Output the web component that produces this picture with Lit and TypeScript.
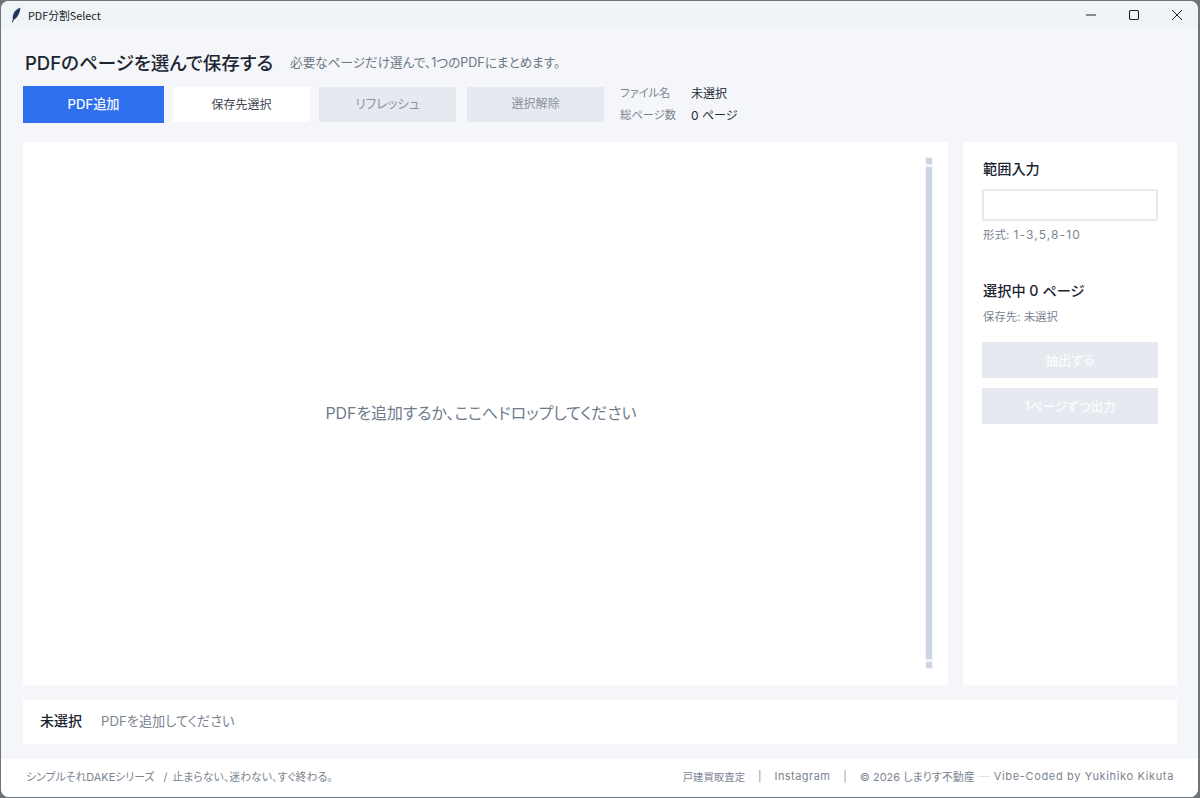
import { LitElement, html, css } from "lit";
import { customElement } from "lit/decorators.js";

@customElement("app-root")
export class AppRoot extends LitElement {
  static styles = css`
    :host {
      display: block;
      width: 1200px;
      height: 798px;
      background: #6f7478;
      font-family: Inter, "Noto Sans CJK JP", "Noto Sans", sans-serif;
      font-feature-settings: "palt";
      color: #1f2937;
      overflow: hidden;
    }
    .win {
      box-sizing: border-box;
      width: 1197px;
      height: 796px;
      margin-left: 1px;
      margin-top: 1px;
      border-radius: 8px;
      overflow: hidden;
      background: #f4f6f9;
      display: flex;
      flex-direction: column;
    }
    .titlebar {
      height: 28px;
      flex: none;
      background: #eff4f8;
      display: flex;
      align-items: center;
      padding-left: 9px;
      font-family: "Noto Sans CJK JP", sans-serif;
      font-feature-settings: normal;
      font-size: 10.8px;
      color: #1a1a1a;
    }
    .titlebar .feather { width: 12px; height: 16px; margin-right: 6px; flex: none; }
    .titlebar .name { flex: 1; }
    .ctl { width: 43px; height: 28px; display: flex; align-items: center; justify-content: center; }
    .ctl svg { width: 12px; height: 12px; }
    .content {
      flex: 1;
      display: flex;
      flex-direction: column;
      padding: 0 21px 15px 22px;
      min-height: 0;
    }
    .head {
      display: flex;
      align-items: center;
      height: 24px;
      margin-top: 22px;
      padding-left: 2px;
    }
    .head h1 { font-size: 18.5px; font-weight: 500; margin: 0; color: #1b2430; line-height: 24px; }
    .head p { font-size: 12.6px; margin: 0 0 0 17px; color: #6b7685; line-height: 16px; }
    .toolbar { display: flex; align-items: center; height: 37px; margin-top: 11px; }
    .btn {
      box-sizing: border-box;
      display: flex;
      align-items: center;
      justify-content: center;
      font-size: 12px;
      border: none;
      width: 137px;
      height: 35px;
      flex: none;
      padding-bottom: 3px;
    }
    .primary { width: 141px; height: 37px; background: #2f6fed; color: #f4f8ff; font-weight: 500; margin-right: 9px; font-size: 13.2px; padding-bottom: 2px; }
    .white { background: #ffffff; color: #3f4652; margin-right: 9px; }
    .muted { background: #e6e9ef; color: #8a93a0; margin-right: 11px; font-size: 12.6px; padding-bottom: 4px; }
    .muted.last { margin-right: 16px; font-size: 12.2px; padding-bottom: 3px; }
    .info {
      display: grid;
      grid-template-columns: 71px auto;
      row-gap: 3px;
      font-size: 12px;
      line-height: 19px;
      margin-top: -1px;
    }
    .info .k { color: #7b8491; font-size: 11.3px; }
    .info .v { color: #1f2937; }
    .main { flex: 1; display: flex; gap: 15px; margin-top: 19px; min-height: 0; }
    .canvas {
      flex: 1;
      background: #fff;
      position: relative;
      display: flex;
      align-items: center;
      justify-content: center;
      padding-right: 9px;
    }
    .drop { font-size: 15.9px; color: #6f7b8c; margin-bottom: 3px; }
    .scroll {
      position: absolute;
      right: 15px;
      top: 15px;
      bottom: 16px;
      width: 8px;
      background: #f3f5f9;
      display: flex;
      flex-direction: column;
      align-items: center;
      padding: 1px 0;
      box-sizing: border-box;
    }
    .scroll i { display: block; width: 6px; background: #cdd5e5; flex: none; height: 6px; }
    .scroll i.thumb { flex: 1; margin: 3px 0; height: auto; }
    .side {
      width: 214px;
      flex: none;
      background: #fff;
      box-sizing: border-box;
      padding: 17px 19px 0 19px;
      display: flex;
      flex-direction: column;
    }
    .side h2 { font-size: 14.2px; font-weight: 500; margin: 0; line-height: 20px; color: #1b2430; padding-left: 1px; }
    .input {
      box-sizing: border-box;
      height: 32px;
      margin-top: 10px;
      border: 2px solid #e6e9ef;
      background: #fff;
      border-radius: 1px;
    }
    .hint { font-size: 11.5px; color: #7b8491; line-height: 16px; margin-top: 6px; padding-left: 1px; }
    .hint .nums { letter-spacing: 1.1px; margin-left: 1px; font-size: 12px; }
    .side h2.count { margin-top: 38px; }
    .save { font-size: 11.4px; color: #7b8491; line-height: 16px; margin-top: 8px; padding-left: 1px; }
    .sbtn {
      height: 36px;
      background: #e6e9ef;
      color: #fbfcfd;
      font-size: 12.6px;
      display: flex;
      align-items: center;
      justify-content: center;
      font-weight: 500;
      padding-bottom: 2px;
      box-sizing: border-box;
    }
    .sbtn.first { margin-top: 17px; margin-bottom: 10px; font-size: 13px; }
    .status {
      flex: none;
      height: 44px;
      margin-top: 15px;
      background: #fff;
      display: flex;
      align-items: center;
      padding-left: 17px;
      padding-bottom: 3px;
      box-sizing: border-box;
    }
    .status b { font-size: 14px; font-weight: 500; color: #1b2430; width: 61px; margin-top: -1px; }
    .status span { font-size: 13.2px; color: #7b8491; }
    .footer {
      box-sizing: border-box;
      flex: none;
      height: 38px;
      background: #fff;
      display: flex;
      align-items: center;
      justify-content: space-between;
      padding: 0 24px 4px 25px;
      font-size: 10.9px;
      color: #7b8491;
    }
    .footer .r { display: flex; align-items: center; }
    .kanji { font-size: 10.4px; }
    .insta { font-size: 11px; letter-spacing: 0.45px; }
    .copy { font-size: 11px; }
    .vibe { font-size: 11px; letter-spacing: 0.65px; }
    .sep { margin: 0 13px; color: #8a93a0; font-size: 10.4px; }
    .dash { margin: 0 4px; color: #dfe3e8; font-size: 11px; }
    .slash { margin-left: 9px; margin-right: 5px; }
  `;

  render() {
    return html`
      <div class="win">
        <div class="titlebar">
          <svg class="feather" viewBox="0 0 12 16">
            <path d="M10.5 0.8C7 1.4 3.6 4.6 2.8 9c-.2 1.2-.2 2.4 0 3.3l1 .2C7 11.6 9.8 6.8 10.5 .8z" fill="#2a3f6b" />
            <path d="M8.6 3L2.2 15.2" stroke="#1a2336" stroke-width="1" fill="none" />
          </svg>
          <span class="name">PDF分割Select</span>
          <div class="ctl"><svg viewBox="0 0 12 12"><path d="M1 6h10" stroke="#222" stroke-width="1.1" /></svg></div>
          <div class="ctl"><svg viewBox="0 0 12 12"><rect x="1.5" y="1.5" width="9" height="9" rx="1.2" fill="none" stroke="#222" stroke-width="1.1" /></svg></div>
          <div class="ctl"><svg viewBox="0 0 12 12"><path d="M1 1l10 10M11 1L1 11" stroke="#222" stroke-width="1" /></svg></div>
        </div>
        <div class="content">
          <div class="head">
            <h1>PDFのページを選んで保存する</h1>
            <p>必要なページだけ選んで、1つのPDFにまとめます。</p>
          </div>
          <div class="toolbar">
            <div class="btn primary">PDF追加</div>
            <div class="btn white">保存先選択</div>
            <div class="btn muted">リフレッシュ</div>
            <div class="btn muted last">選択解除</div>
            <div class="info">
              <span class="k">ファイル名</span><span class="v">未選択</span>
              <span class="k">総ページ数</span><span class="v">0 ページ</span>
            </div>
          </div>
          <div class="main">
            <div class="canvas">
              <div class="drop">PDFを追加するか、ここへドロップしてください</div>
              <div class="scroll"><i></i><i class="thumb"></i><i></i></div>
            </div>
            <div class="side">
              <h2>範囲入力</h2>
              <div class="input"></div>
              <div class="hint">形式: <span class="nums">1-3,5,8-10</span></div>
              <h2 class="count">選択中 0 ページ</h2>
              <div class="save">保存先: 未選択</div>
              <div class="sbtn first">抽出する</div>
              <div class="sbtn">1ページずつ出力</div>
            </div>
          </div>
          <div class="status"><b>未選択</b><span>PDFを追加してください</span></div>
        </div>
        <div class="footer">
          <div>シンプルそれDAKEシリーズ<span class="slash">/</span>止まらない、迷わない、すぐ終わる。</div>
          <div class="r">
            <span class="kanji">戸建買取査定</span><span class="sep">|</span><span class="insta">Instagram</span><span class="sep">|</span>
            <span class="copy">© 2026 しまりす不動産</span><span class="dash">—</span><span class="vibe">Vibe-Coded by Yukihiko Kikuta</span>
          </div>
        </div>
      </div>
    `;
  }
}
